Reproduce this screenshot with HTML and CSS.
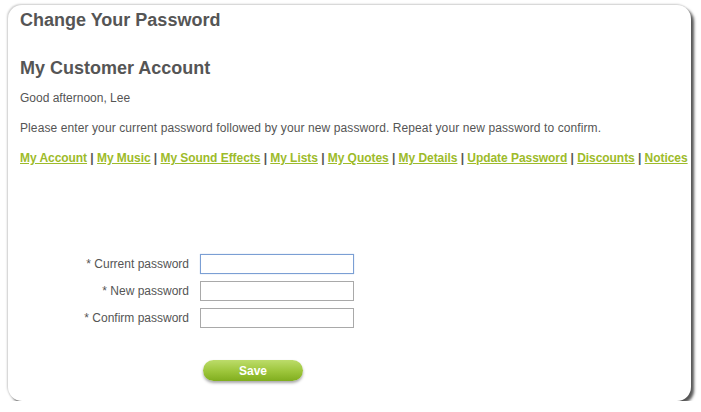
FILE: index.html
```html
<!DOCTYPE html>
<html lang="en">
<head>
    <meta charset="UTF-8">
    <title>Change Your Password</title>
    <link rel="stylesheet" href="styles.css">
</head>
<body>
    <div class="card">
        <h1 class="page-title">Change Your Password</h1>

        <h2 class="section-title">My Customer Account</h2>
        <p class="greeting">Good afternoon, Lee</p>
        <p class="intro">Please enter your current password followed by your new password. Repeat your new password to confirm.</p>

        <p class="account-nav">
            <a href="#">My Account</a> | <a href="#">My Music</a> | <a href="#">My Sound Effects</a> | <a href="#">My Lists</a> | <a href="#">My Quotes</a> | <a href="#">My Details</a> | <a href="#">Update Password</a> | <a href="#">Discounts</a> | <a href="#">Notices</a>
        </p>

        <form class="password-form" action="#" method="POST">
            <label for="current">* Current password</label>
            <input type="password" id="current" name="current" class="focused" autofocus>

            <label for="newPassword">* New password</label>
            <input type="password" id="newPassword" name="newPassword">

            <label for="confirm">* Confirm password</label>
            <input type="password" id="confirm" name="confirm">

            <div class="form-actions">
                <button type="submit" class="save-btn">Save</button>
            </div>
        </form>
    </div>
</body>
</html>
```

FILE: styles.css
```css
* {
    margin: 0;
    padding: 0;
    box-sizing: border-box;
}

body {
    font-family: 'Liberation Sans', Arial, sans-serif;
    background: #fff;
    color: #555;
    padding: 5px 0 0 8px;
}

.card {
    width: 683px;
    height: 396px;
    background: #fff;
    border-radius: 14px;
    box-shadow: 3px 3px 3px #555, -1px -1px 2px #ccc;
    padding: 4px 0 0 12px;
}

.page-title {
    font-size: 18px;
    line-height: 22px;
    color: #555;
}

.section-title {
    font-size: 18px;
    line-height: 22px;
    color: #555;
    margin-top: 26px;
}

.greeting,
.intro,
.account-nav {
    font-size: 12px;
    line-height: 14px;
}

.greeting {
    margin-top: 12px;
}

.intro {
    margin-top: 16px;
    letter-spacing: 0.1px;
}

.account-nav {
    margin-top: 16px;
    font-weight: bold;
    color: #555;
    white-space: nowrap;
    letter-spacing: -0.05px;
}

.account-nav a {
    color: #9dbb2a;
}

.password-form {
    display: grid;
    grid-template-columns: 169px 154px;
    column-gap: 11px;
    row-gap: 7px;
    align-items: center;
    margin-top: 89px;
}

.password-form label {
    font-size: 12px;
    text-align: right;
    color: #555;
}

.password-form input {
    height: 20px;
    border: 1px solid #a9a9a9;
    font-size: 12px;
    padding: 0 3px;
    outline: none;
    caret-color: #000;
}

.password-form input.focused {
    border-color: #7b9fd4;
    box-shadow: 0 0 1px #a9c2e8;
}

.form-actions {
    grid-column: 2;
    padding: 25px 0 0 3px;
}

.save-btn {
    width: 100px;
    height: 21px;
    border: none;
    border-radius: 11px;
    background: linear-gradient(#bcdc6a, #9cc53a 55%, #80ad1e);
    box-shadow: 0 2px 3px rgba(0, 0, 0, 0.35);
    color: #fff;
    font-family: 'Liberation Sans', Arial, sans-serif;
    font-size: 12px;
    font-weight: bold;
    cursor: pointer;
}
```
